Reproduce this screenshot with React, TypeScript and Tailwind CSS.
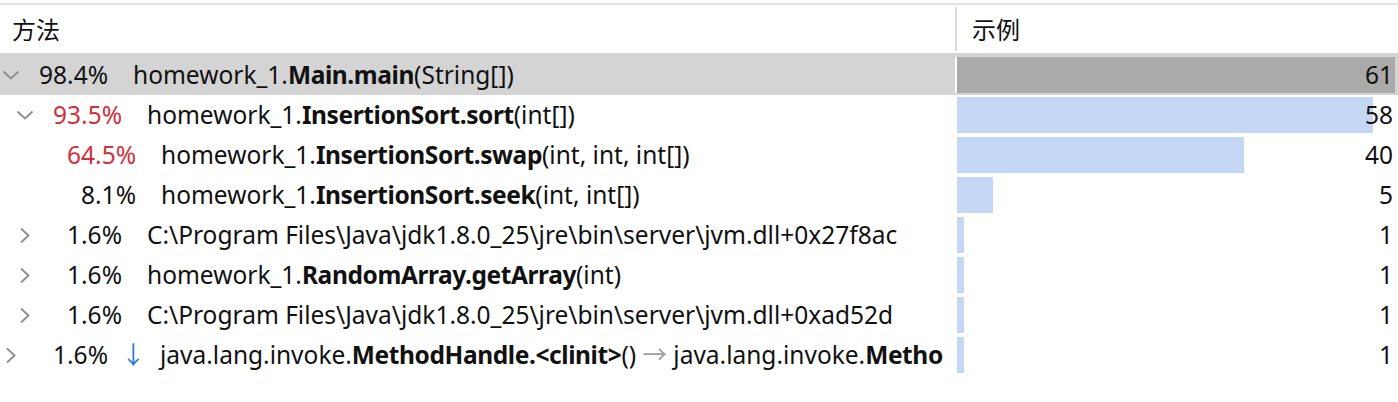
import React from "react";

type Part = { t: string; b?: boolean; g?: boolean };
type Row = {
  level: number;
  chev: "down" | "right" | null;
  pct: string;
  red?: boolean;
  arrow?: boolean;
  name: Part[];
  value: number;
  selected?: boolean;
};

const rows: Row[] = [
  { level: 0, chev: "down", pct: "98.4%", name: [{ t: "homework_1." }, { t: "Main.main", b: true }, { t: "(String[])" }], value: 61, selected: true },
  { level: 1, chev: "down", pct: "93.5%", red: true, name: [{ t: "homework_1." }, { t: "InsertionSort.sort", b: true }, { t: "(int[])" }], value: 58 },
  { level: 2, chev: null, pct: "64.5%", red: true, name: [{ t: "homework_1." }, { t: "InsertionSort.swap", b: true }, { t: "(int, int, int[])" }], value: 40 },
  { level: 2, chev: null, pct: "8.1%", name: [{ t: "homework_1." }, { t: "InsertionSort.seek", b: true }, { t: "(int, int[])" }], value: 5 },
  { level: 1, chev: "right", pct: "1.6%", name: [{ t: "C:\\Program Files\\Java\\jdk1.8.0_25\\jre\\bin\\server\\jvm.dll+0x27f8ac" }], value: 1 },
  { level: 1, chev: "right", pct: "1.6%", name: [{ t: "homework_1." }, { t: "RandomArray.getArray", b: true }, { t: "(int)" }], value: 1 },
  { level: 1, chev: "right", pct: "1.6%", name: [{ t: "C:\\Program Files\\Java\\jdk1.8.0_25\\jre\\bin\\server\\jvm.dll+0xad52d" }], value: 1 },
  { level: 0, chev: "right", pct: "1.6%", arrow: true, name: [{ t: "java.lang.invoke." }, { t: "MethodHandle.<clinit>", b: true }, { t: "()" }, { t: " → ", g: true }, { t: "java.lang.invoke." }, { t: "Metho", b: true }], value: 1 },
];

const MAX = 61;
const BAR_W = 438;

function Chevron({ dir }: { dir: "down" | "right" }) {
  if (dir === "down") {
    return (
      <svg width="18" height="10" viewBox="0 0 18 10" className="block">
        <path d="M1.5 1.5 L9 8.5 L16.5 1.5" fill="none" stroke="#8c8c8c" strokeWidth="1.8" />
      </svg>
    );
  }
  return (
    <svg width="12" height="17" viewBox="0 0 12 17" className="block">
      <path d="M2 1.5 L9.5 8.5 L2 15.5" fill="none" stroke="#8c8c8c" strokeWidth="1.8" />
    </svg>
  );
}

function Name({ parts }: { parts: Part[] }) {
  return (
    <>
      {parts.map((p, j) => (
        <span key={j} className={p.b ? "font-bold tracking-[-0.4px]" : p.g ? "text-[#a0a0a0]" : ""}>
          {p.t}
        </span>
      ))}
    </>
  );
}

export default function App() {
  const font = { fontFamily: '"Noto Sans", "Noto Sans CJK SC", sans-serif' };
  const cjk = { fontFamily: '"Noto Sans CJK SC", sans-serif' };
  return (
    <div className="w-[1398px] h-[402px] bg-white overflow-hidden text-[#111]" style={font}>
      <div className="h-[3px]" />
      <div className="h-[2px] bg-[#e3e3e3]" />
      {/* header */}
      <div className="flex h-[48px] items-center">
        <div className="w-[957px] h-[44px] flex items-center pl-[12px] text-[24px] border-r-2 border-[#dadada]" style={cjk}>
          方法
        </div>
        <div className="flex-1 pl-[15px] text-[24px]" style={cjk}>
          示例
        </div>
      </div>
      {rows.map((r, i) => (
        <div
          key={i}
          className={`flex ${r.selected ? "h-[42px] pt-[4px] pb-[2px] bg-[#d4d4d4]" : "h-[40px] py-[2px]"}`}
        >
          <div
            className="w-[955px] shrink-0 flex items-center overflow-hidden whitespace-nowrap text-[24.5px] leading-none"
            style={{ paddingLeft: r.level * 14 }}
          >
            <div className="w-[22px] shrink-0 flex justify-center items-center">
              {r.chev && <Chevron dir={r.chev} />}
            </div>
            <div className={`w-[86px] shrink-0 text-right ${r.red ? "text-[#d0313a]" : ""}`}>{r.pct}</div>
            {r.arrow ? (
              <>
                <div className="ml-[13px] w-[16px] shrink-0 text-center text-[#2b7cd3]">↓</div>
                <div className="ml-[23px] shrink-0">
                  <Name parts={r.name} />
                </div>
              </>
            ) : (
              <div className="ml-[25px] shrink-0">
                <Name parts={r.name} />
              </div>
            )}
          </div>
          <div className={`w-[2px] shrink-0 ${r.selected ? "bg-white" : ""}`} />
          <div className="relative flex-1">
            <div
              className={`absolute left-0 top-0 bottom-0 ${r.selected ? "bg-[#aaaaaa]" : "bg-[#c4d8f5]"}`}
              style={{ width: Math.round((r.value / MAX) * BAR_W) }}
            />
            <div className="relative h-full flex items-center justify-end pr-[5px] text-[24.5px] leading-none">{r.value}</div>
          </div>
        </div>
      ))}
    </div>
  );
}
